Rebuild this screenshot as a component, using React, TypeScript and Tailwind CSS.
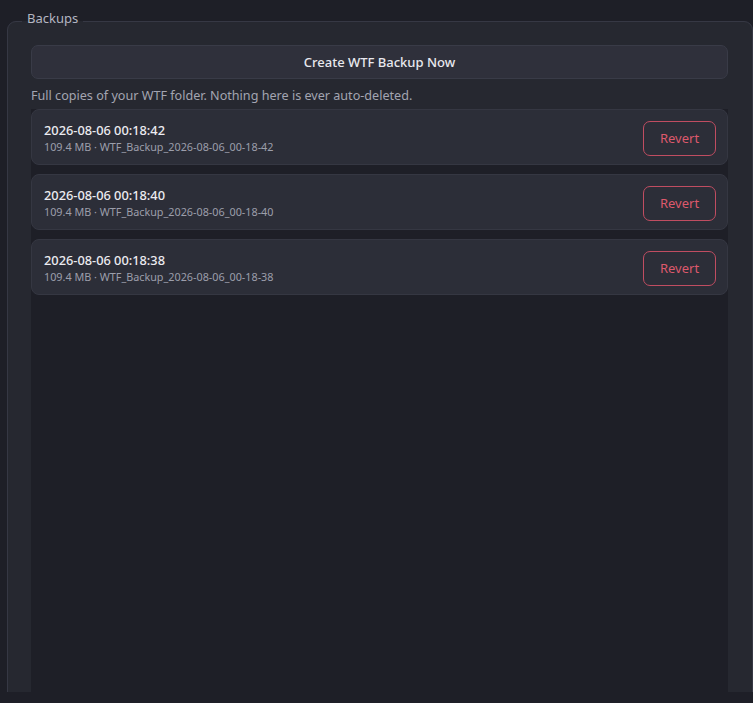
import React from "react";

const rows = [
  { t: "2026-08-06 00:18:42", f: "WTF_Backup_2026-08-06_00-18-42" },
  { t: "2026-08-06 00:18:40", f: "WTF_Backup_2026-08-06_00-18-40" },
  { t: "2026-08-06 00:18:38", f: "WTF_Backup_2026-08-06_00-18-38" },
];

export default function App() {
  return (
    <div
      className="w-[753px] h-[703px] bg-[#1e1f27] overflow-hidden"
      style={{ fontFamily: '"Noto Sans", "Open Sans", sans-serif' }}
    >
      <div className="h-[692px] overflow-hidden pl-[7px]">
        <fieldset className="h-[720px] border border-[#363844] rounded-[9px] bg-[#262830] pl-[23px] pr-[24px] pt-[15px] flex flex-col min-w-0 mt-[13px]">
          <legend className="ml-[-9px] px-[5px] text-[13px] leading-[17px] text-[#b4b6c2] -translate-y-[3px]">
            Backups
          </legend>
          <button className="h-[34px] w-full rounded-[7px] bg-[#2f303b] border border-[#393b47] text-[13px] text-[#e8e8ee] font-medium pt-[2px]">
            Create WTF Backup Now
          </button>
          <p className="mt-[8px] text-[12.6px] leading-[18px] text-[#a3a5b1]">
            Full copies of your WTF folder. Nothing here is ever auto-deleted.
          </p>
          <div className="mt-[4px] flex-1 bg-[#1e1f27] flex flex-col gap-[9px]">
            {rows.map((r) => (
              <div
                key={r.t}
                className="h-[56px] rounded-[8px] bg-[#2c2e38] border border-[#353742] flex items-center justify-between pl-[12px] pr-[11px]"
              >
                <div className="flex flex-col pt-[2px]">
                  <div className="text-[12.8px] leading-[18px] font-medium text-[#ececf1]">
                    {r.t}
                  </div>
                  <div className="text-[10.8px] leading-[16px] text-[#9c9eab]">
                    109.4 MB · {r.f}
                  </div>
                </div>
                <button className="w-[73px] h-[35px] mt-[2px] rounded-[7px] border border-[#c04d61] text-[13px] text-[#dd596c] pt-[2px]">
                  Revert
                </button>
              </div>
            ))}
          </div>
        </fieldset>
      </div>
    </div>
  );
}
